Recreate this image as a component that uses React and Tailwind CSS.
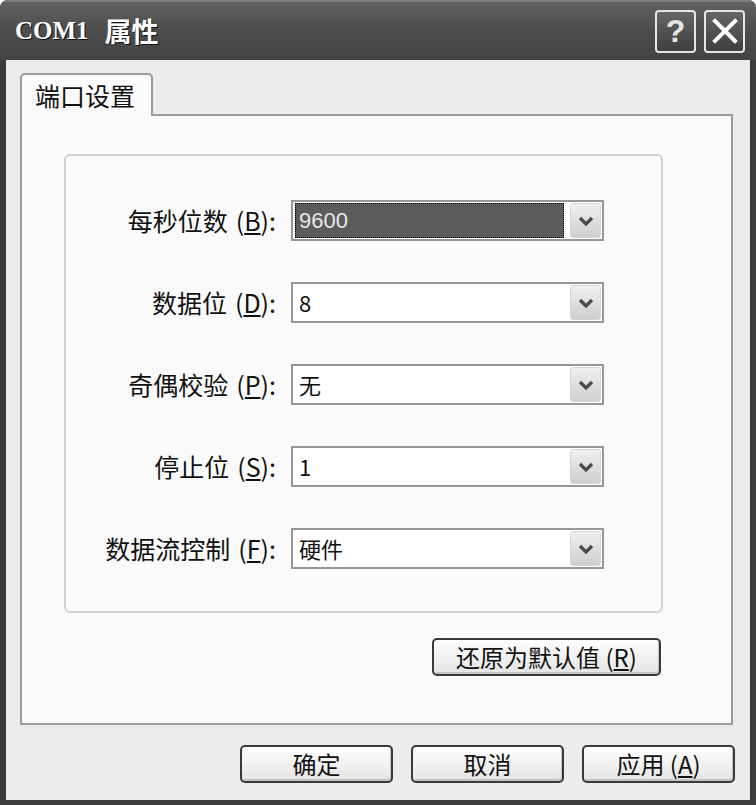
const cjk = "font-['Noto_Sans_CJK_SC','Liberation_Sans',sans-serif]";

const Chevron = () => (
  <svg width="16" height="12" viewBox="0 0 16 12">
    <polyline points="2,3 8,9 14,3" fill="none" stroke="#4a4a4a" strokeWidth="3.2" />
  </svg>
);

const Combo = ({ value, selected }) => (
  <div className="h-[41px] border-2 border-[#979797] bg-white flex items-stretch p-[1px]">
    <div className="flex-1 flex items-center pl-[1px] pr-[6px]">
      {selected ? (
        <div className="h-full w-full bg-[#5c5c5c] border border-dotted border-black flex items-center pl-[3px] text-[22px] text-[#e8e8e8] font-['Liberation_Sans',sans-serif]">
          {value}
        </div>
      ) : (
        <span className={`pl-[4px] text-[22px] text-[#111] ${cjk}`}>{value}</span>
      )}
    </div>
    <div className="w-[31px] rounded-[3px] bg-gradient-to-b from-[#f0f0f0] to-[#cfcfcf] border border-[#d6d6d6] flex items-center justify-center">
      <Chevron />
    </div>
  </div>
);

const Label = ({ text, mn }) => (
  <div className={`flex items-center justify-end pr-[2px] text-[25px] text-[#111] ${cjk}`}>
    {text}
    <span className="pl-[8px]">
      (<span className="underline">{mn}</span>):
    </span>
  </div>
);

const Btn = ({ children, w = "w-[153px]" }) => (
  <button
    className={`${w} h-[38px] rounded-[5px] border-2 border-[#3a3a3a] bg-gradient-to-b from-white to-[#e4e4e4] shadow-[inset_-1px_-2px_0_#c4c4c4] text-[24px] text-[#111] leading-none ${cjk}`}
  >
    {children}
  </button>
);

const rows = [
  { text: "每秒位数", mn: "B", value: "9600", selected: true },
  { text: "数据位", mn: "D", value: "8" },
  { text: "奇偶校验", mn: "P", value: "无" },
  { text: "停止位", mn: "S", value: "1" },
  { text: "数据流控制", mn: "F", value: "硬件" },
];

export default function App() {
  return (
    <div className="w-[756px] h-[805px] bg-white">
      <div className="w-full h-full bg-[#3b3b3b] rounded-t-[8px] flex flex-col overflow-hidden">
        {/* 标题栏 */}
        <div className="h-[60px] shrink-0 flex items-center pl-[15px] pr-[11px] bg-gradient-to-b from-[#626262] via-[#4c4c4c] to-[#444444] border-t-2 border-[#7c7c7c]">
          <div className="flex-1 flex items-center gap-[16px] font-bold text-white [text-shadow:1px_1px_0_#111]">
            <span className="text-[25px] font-['Liberation_Serif',serif]">COM1</span>
            <span className={`text-[27px] ${cjk}`}>属性</span>
          </div>
          <div className="flex gap-[8px]">
            <div className="w-[41px] h-[43px] rounded-[4px] border-2 border-[#e6e6e6] bg-gradient-to-b from-[#666666] to-[#3e3e3e] flex items-center justify-center text-[#e4e4e4] text-[32px] font-bold font-['Liberation_Sans',sans-serif] leading-none">
              ?
            </div>
            <div className="w-[41px] h-[43px] rounded-[4px] border-2 border-[#e6e6e6] bg-gradient-to-b from-[#666666] to-[#3e3e3e] flex items-center justify-center">
              <svg width="26" height="26" viewBox="0 0 26 26">
                <path d="M3 3 L23 23 M23 3 L3 23" stroke="white" strokeWidth="4" strokeLinecap="square" />
              </svg>
            </div>
          </div>
        </div>

        {/* 主体 */}
        <div className="flex-1 mx-[6px] mb-[5px] bg-[#ececec] flex flex-col pt-[13px]">
          <div className="ml-[14px] mr-[17px]">
            <div className={`relative z-10 -mb-[2px] w-[133px] h-[43px] bg-[#fafafa] border-2 border-b-0 border-[#9c9c9c] rounded-t-[5px] flex items-center pl-[13px] text-[25px] text-[#111] ${cjk}`}>
              端口设置
            </div>
            <div className="h-[611px] bg-[#fafafa] border-2 border-[#9c9c9c] pt-[38px] pl-[42px] flex flex-col">
              <div className="w-[599px] h-[459px] border-2 border-[#d2d2d2] rounded-[6px] pt-[44px]">
                <div className="grid grid-cols-[212px_313px] gap-x-[13px] gap-y-[41px]">
                  {rows.map((r) => (
                    <div key={r.text} className="contents">
                      <Label text={r.text} mn={r.mn} />
                      <Combo value={r.value} selected={r.selected} />
                    </div>
                  ))}
                </div>
              </div>
              <div className="w-[599px] flex justify-end mt-[25px] pr-[2px]">
                <Btn w="w-[229px]">
                  还原为默认值 (<span className="underline">R</span>)
                </Btn>
              </div>
            </div>
          </div>
          <div className="flex justify-end gap-[18px] pr-[15px] mt-[20px]">
            <Btn>确定</Btn>
            <Btn>取消</Btn>
            <Btn>
              应用 (<span className="underline">A</span>)
            </Btn>
          </div>
        </div>
      </div>
    </div>
  );
}
